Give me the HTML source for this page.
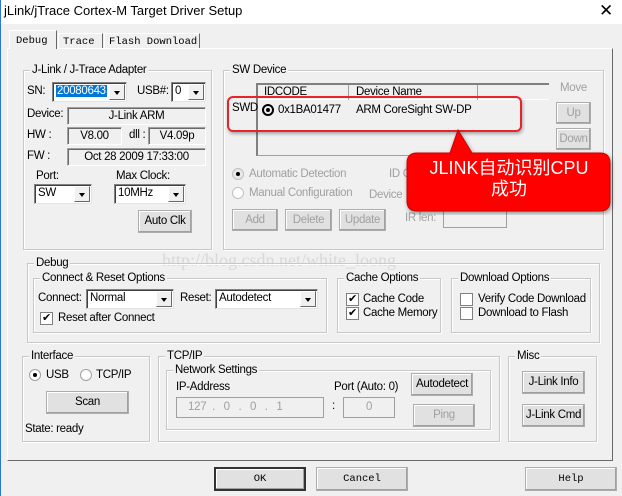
<!DOCTYPE html>
<html><head><meta charset="utf-8"><style>
*{box-sizing:border-box;margin:0;padding:0}
body{width:622px;height:496px;background:#f0f0f0;font:11.5px "Liberation Sans",sans-serif;letter-spacing:-0.3px;color:#000;position:relative;overflow:hidden}
.a{position:absolute;white-space:nowrap}
.g{position:absolute;border:1px solid #c8c8c8;box-shadow:inset 1px 1px 0 #fff,1px 1px 0 #fff}
.g>span{position:absolute;left:6px;top:-8px;background:#f0f0f0;padding:0 2px;line-height:14px}
.f{position:absolute;border:1px solid #a0a0a0;border-right-color:#fff;border-bottom-color:#fff;box-shadow:inset 1px 1px 0 #696969;background:#f0f0f0;text-align:center;line-height:16px}
.c{position:absolute;background:#fff;border:1px solid #828282;border-right-color:#e3e3e3;border-bottom-color:#e3e3e3;box-shadow:inset 1px 1px 0 #404040;line-height:17px;padding-left:3px}
.c i{position:absolute;right:1px;top:1px;bottom:1px;width:16px;background:#f0f0f0;border:1px solid #fff;border-right-color:#696969;border-bottom-color:#696969}
.c i:after{content:"";position:absolute;left:4px;top:6px;border:3.5px solid transparent;border-top:4px solid #000}
.b{position:absolute;background:#e1e1e1;border:1px solid #adadad;box-shadow:inset -1px -1px 0 #a0a0a0,inset 1px 1px 0 #fff;text-align:center}
.d{color:#a0a0a0}
.r{position:absolute;width:12px;height:12px;border-radius:50%;border:1px solid #a0a0a0;background:#fff}
.r.on:after{content:"";position:absolute;left:3px;top:3px;width:4px;height:4px;border-radius:50%;background:#000}
.k{position:absolute;width:13px;height:13px;border:1px solid #808080;background:#fff;font-size:11px;line-height:11px;text-align:center}
.m{font:10.5px 'Liberation Mono',monospace;letter-spacing:0}
</style></head><body>
<div class="a" style="left:0;top:0;width:622px;height:24px;background:#fff"></div>
<div class="a" style="left:0;top:0;width:1px;height:496px;background:#2b79d6"></div>
<div class="a" style="left:4px;top:3px;font-size:13px;letter-spacing:0">jLink/jTrace Cortex-M Target Driver Setup</div>
<div class="a" style="left:599px;top:1px;font-size:17px;font-weight:300">✕</div>

<div class="a" style="left:7px;top:48px;width:606px;height:413px;border:1px solid #fff;border-right-color:#696969;border-bottom-color:#696969"></div>
<div class="a m" style="left:9px;top:30px;width:48px;height:19px;border:1px solid #fff;border-right-color:#696969;border-bottom:none;background:#f0f0f0;padding:4px 0 0 6px">Debug</div>
<div class="a m" style="left:58px;top:33px;width:45px;height:15px;border:1px solid #fff;border-right-color:#696969;border-bottom:none;padding:2px 0 0 4px">Trace</div>
<div class="a m" style="left:104px;top:33px;width:96px;height:15px;border:1px solid #fff;border-right-color:#696969;border-bottom:none;padding:2px 0 0 4px">Flash Download</div>

<div class="g" style="left:23px;top:70px;width:189px;height:180px"><span>J-Link / J-Trace Adapter</span></div>
<div class="a" style="left:27px;top:85px">SN:</div>
<div class="c" style="left:52px;top:82px;width:75px;height:20px"><span style="background:#0078d7;color:#fff;padding:0 1px">20080643</span><i></i></div>
<div class="a" style="left:137px;top:85px">USB#:</div>
<div class="c" style="left:171px;top:82px;width:35px;height:20px">0<i></i></div>
<div class="a" style="left:27px;top:108px">Device:</div>
<div class="f" style="left:67px;top:107px;width:139px;height:18px">J-Link ARM</div>
<div class="a" style="left:27px;top:129px">HW :</div>
<div class="f" style="left:67px;top:127px;width:55px;height:18px">V8.00</div>
<div class="a" style="left:129px;top:129px">dll :</div>
<div class="f" style="left:148px;top:127px;width:58px;height:18px">V4.09p</div>
<div class="a" style="left:27px;top:150px">FW :</div>
<div class="f" style="left:67px;top:148px;width:139px;height:18px">Oct 28 2009 17:33:00</div>
<div class="a" style="left:36px;top:170px">Port:</div>
<div class="c" style="left:34px;top:184px;width:58px;height:20px">SW<i></i></div>
<div class="a" style="left:116px;top:170px">Max Clock:</div>
<div class="c" style="left:114px;top:184px;width:72px;height:20px">10MHz<i></i></div>
<div class="b" style="left:138px;top:210px;width:54px;height:23px;line-height:21px">Auto Clk</div>

<div class="g" style="left:223px;top:70px;width:381px;height:180px"><span>SW Device</span></div>
<div class="a" style="left:256px;top:83px;width:293px;height:73px;border:1px solid #a0a0a0;border-right:none;border-top:2px solid #808080;border-left:2px solid #808080"></div>
<div class="a" style="left:258px;top:85px;width:291px;height:15px;border-bottom:1px solid #fff"></div>
<div class="a" style="left:348px;top:85px;width:1px;height:15px;background:#a0a0a0"></div>
<div class="a" style="left:477px;top:85px;width:1px;height:15px;background:#a0a0a0"></div>
<div class="a" style="left:264px;top:86px">IDCODE</div>
<div class="a" style="left:356px;top:86px">Device Name</div>
<div class="a" style="left:232px;top:102px">SWD</div>
<div class="a" style="left:262px;top:104px;width:12px;height:12px;border:2px solid #000;border-radius:50%"><div style="position:absolute;left:2px;top:2px;width:4px;height:4px;background:#000;border-radius:50%"></div></div>
<div class="a" style="left:278px;top:104px">0x1BA01477</div>
<div class="a" style="left:356px;top:104px">ARM CoreSight SW-DP</div>
<div class="a" style="left:227px;top:96px;width:295px;height:36px;border:2px solid #e8232a;border-radius:6px;box-shadow:1px 2px 3px rgba(0,0,0,.3)"></div>
<div class="a d" style="left:560px;top:82px">Move</div>
<div class="b d" style="left:556px;top:102px;width:35px;height:22px;line-height:20px">Up</div>
<div class="b d" style="left:556px;top:128px;width:35px;height:22px;line-height:20px">Down</div>
<div class="r on" style="left:232px;top:168px;border-color:#c0c0c0;background:#e8e8e8"></div>
<div class="a d" style="left:249px;top:168px">Automatic Detection</div>
<div class="a d" style="left:389px;top:168px">ID C</div>
<div class="r" style="left:232px;top:187px;border-color:#c0c0c0"></div>
<div class="a d" style="left:249px;top:187px">Manual Configuration</div>
<div class="a d" style="left:369px;top:189px">Device</div>
<div class="b d" style="left:232px;top:209px;width:46px;height:22px;line-height:20px">Add</div>
<div class="b d" style="left:285px;top:209px;width:47px;height:22px;line-height:20px">Delete</div>
<div class="b d" style="left:339px;top:209px;width:47px;height:22px;line-height:20px">Update</div>
<div class="a d" style="left:405px;top:212px">IR len:</div>
<div class="a" style="left:443px;top:209px;width:64px;height:19px;border:1px solid #a0a0a0"></div>
<svg class="a" style="left:400px;top:125px" width="215" height="90"><path d="M58 5 L72 28 L200 28 Q210 28 210 38 L210 76 Q210 86 200 86 L17 86 Q7 86 7 76 L7 38 Q7 28 17 28 L50 28 Z" fill="#f00" stroke="#c00" stroke-width="1" style="filter:drop-shadow(1px 2px 2px rgba(0,0,0,.4))"/></svg>
<div class="a" style="left:407px;top:158px;width:204px;text-align:center;color:#fff;letter-spacing:0;font:18px/21px 'Liberation Sans','Noto Sans CJK SC',sans-serif">JLINK自动识别CPU<br>成功</div>

<div class="a" style="left:162px;top:250px;font:18px 'Liberation Serif',serif;letter-spacing:0;color:#d8d8d8">http://blog.csdn.net/white_loong</div>

<div class="g" style="left:27px;top:263px;width:573px;height:80px"><span>Debug</span></div>
<div class="g" style="left:33px;top:278px;width:294px;height:55px"><span>Connect &amp; Reset Options</span></div>
<div class="a" style="left:38px;top:292px">Connect:</div>
<div class="c" style="left:86px;top:289px;width:88px;height:20px">Normal<i></i></div>
<div class="a" style="left:180px;top:292px">Reset:</div>
<div class="c" style="left:215px;top:289px;width:103px;height:20px">Autodetect<i></i></div>
<div class="k" style="left:40px;top:312px">✔</div>
<div class="a" style="left:58px;top:312px">Reset after Connect</div>
<div class="g" style="left:337px;top:278px;width:104px;height:55px"><span>Cache Options</span></div>
<div class="k" style="left:346px;top:293px">✔</div><div class="a" style="left:363px;top:293px">Cache Code</div>
<div class="k" style="left:346px;top:307px">✔</div><div class="a" style="left:363px;top:307px">Cache Memory</div>
<div class="g" style="left:451px;top:278px;width:140px;height:55px"><span>Download Options</span></div>
<div class="k" style="left:460px;top:293px"></div><div class="a" style="left:478px;top:293px">Verify Code Download</div>
<div class="k" style="left:460px;top:307px"></div><div class="a" style="left:478px;top:307px">Download to Flash</div>

<div class="g" style="left:22px;top:356px;width:128px;height:86px"><span>Interface</span></div>
<div class="r on" style="left:29px;top:369px"></div><div class="a" style="left:46px;top:369px">USB</div>
<div class="r" style="left:80px;top:369px"></div><div class="a" style="left:96px;top:369px">TCP/IP</div>
<div class="b" style="left:46px;top:391px;width:83px;height:23px;line-height:21px">Scan</div>
<div class="a" style="left:25px;top:423px">State: ready</div>

<div class="g" style="left:158px;top:356px;width:342px;height:86px"><span>TCP/IP</span></div>
<div class="g" style="left:166px;top:370px;width:325px;height:60px"><span>Network Settings</span></div>
<div class="a" style="left:176px;top:381px">IP-Address</div>
<div class="a" style="left:334px;top:381px">Port (Auto: 0)</div>
<div class="a d" style="left:176px;top:397px;width:148px;height:21px;border:1px solid #a0a0a0;padding:3px 0 0 11px">127&nbsp;&nbsp;.&nbsp;&nbsp;&nbsp;0&nbsp;&nbsp;&nbsp;.&nbsp;&nbsp;&nbsp;0&nbsp;&nbsp;&nbsp;.&nbsp;&nbsp;&nbsp;1</div>
<div class="a" style="left:332px;top:400px">:</div>
<div class="a d" style="left:343px;top:397px;width:52px;height:21px;border:1px solid #a0a0a0;text-align:center;line-height:19px">0</div>
<div class="b" style="left:411px;top:373px;width:62px;height:23px;line-height:21px">Autodetect</div>
<div class="b d" style="left:413px;top:404px;width:62px;height:23px;line-height:21px">Ping</div>

<div class="g" style="left:508px;top:356px;width:89px;height:86px"><span>Misc</span></div>
<div class="b" style="left:522px;top:371px;width:63px;height:23px;line-height:21px">J-Link Info</div>
<div class="b" style="left:522px;top:404px;width:63px;height:23px;line-height:21px">J-Link Cmd</div>

<div class="b m" style="left:214px;top:467px;width:92px;height:24px;line-height:20px;border:2px solid #333">OK</div>
<div class="b m" style="left:316px;top:467px;width:92px;height:24px;line-height:22px">Cancel</div>
<div class="b m" style="left:525px;top:467px;width:92px;height:24px;line-height:22px">Help</div>
</body></html>
